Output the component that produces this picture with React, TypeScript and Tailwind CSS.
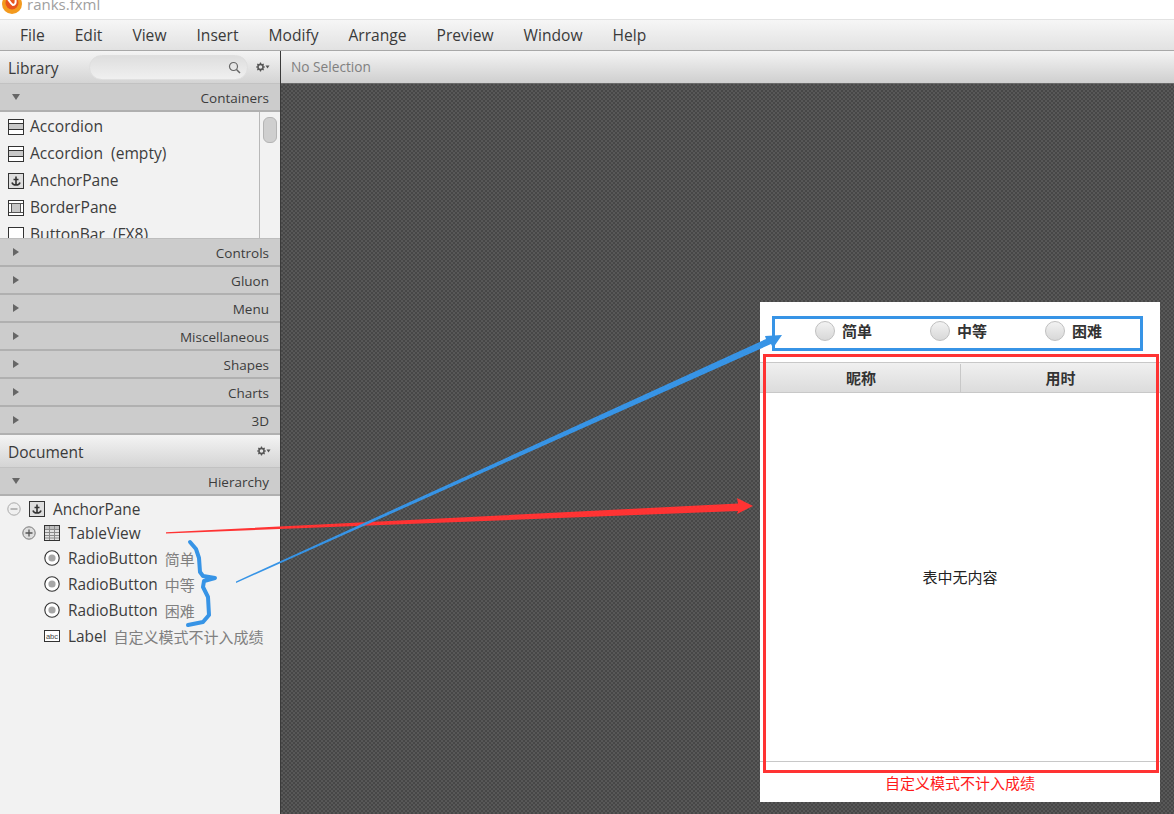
import React from "react";

const FONT = '"Open Sans","Noto Sans","Noto Sans CJK SC",sans-serif';

function Frame({ children, size = 16 }: { children: React.ReactNode; size?: number }) {
  return (
    <svg width={size} height={size} viewBox="0 0 16 16" className="shrink-0">
      {children}
    </svg>
  );
}

function AccordionIcon() {
  return (
    <Frame>
      <rect x="0.5" y="0.5" width="15" height="15" fill="#fff" stroke="#333" />
      <rect x="1" y="5" width="14" height="6" fill="#c8c8c8" />
      <path d="M1 4.5H15M1 10.5H15" stroke="#333" />
    </Frame>
  );
}

function AnchorIcon() {
  return (
    <Frame>
      <rect x="0.5" y="0.5" width="15" height="15" fill="#dedede" stroke="#333" />
      <path d="M8 3.5V12M5.5 6.5H10.5M4 9.5C4.5 11.5 6 12 8 12C10 12 11.5 11.5 12 9.5" fill="none" stroke="#333" strokeWidth="1.6" />
    </Frame>
  );
}

function BorderIcon() {
  return (
    <Frame>
      <rect x="0.5" y="0.5" width="15" height="15" fill="#fff" stroke="#333" />
      <rect x="4" y="4" width="8" height="8" fill="#c8c8c8" />
      <path d="M1 3.5H15M1 12.5H15M3.5 3.5V12.5M12.5 3.5V12.5" stroke="#555" />
    </Frame>
  );
}

function ButtonBarIcon() {
  return (
    <Frame>
      <rect x="0.5" y="0.5" width="15" height="15" fill="#fff" stroke="#333" />
    </Frame>
  );
}

function TableIcon() {
  return (
    <Frame>
      <rect x="0.5" y="0.5" width="15" height="15" fill="#e2e2e2" stroke="#333" />
      <rect x="1" y="1" width="14" height="3" fill="#bdbdbd" />
      <path d="M1 4.5H15M1 7.5H15M1 10.5H15M1 13H15M5.5 1V15M10.5 1V15" stroke="#8a8a8a" />
    </Frame>
  );
}

function RadioIcon() {
  return (
    <Frame>
      <circle cx="8" cy="8" r="7.2" fill="#fff" stroke="#333" strokeWidth="1.1" />
      <circle cx="8" cy="8" r="3.6" fill="#a6a6a6" />
    </Frame>
  );
}

function LabelIcon() {
  return (
    <span className="flex h-[12px] w-[16px] shrink-0 items-center justify-center overflow-hidden border border-[#333] bg-white font-['Liberation_Sans'] text-[7.5px] leading-[9px] text-[#444]">
      abc
    </span>
  );
}

function Gear() {
  return (
    <svg width="14" height="10" viewBox="0 0 14 10">
      <circle cx="4.5" cy="5" r="2.6" fill="none" stroke="#555" strokeWidth="1.6" />
      <path d="M4.5 0.5V2M4.5 8V9.5M0 5H1.5M7.5 5H9M1.3 1.8L2.4 2.9M6.6 7.1L7.7 8.2M7.7 1.8L6.6 2.9M2.4 7.1L1.3 8.2" stroke="#555" strokeWidth="1.2" />
      <path d="M9.5 3.5H13.5L11.5 6.5Z" fill="#555" />
    </svg>
  );
}

function TreeToggle({ plus }: { plus?: boolean }) {
  return (
    <svg width="14" height="14" viewBox="0 0 14 14" className="shrink-0">
      <circle cx="7" cy="7" r="6.2" fill={plus ? "#dedede" : "#f0f0f0"} stroke={plus ? "#777" : "#aaa"} />
      <path d={plus ? "M3.5 7H10.5M7 3.5V10.5" : "M3.5 7H10.5"} stroke={plus ? "#555" : "#999"} strokeWidth="1.3" />
    </svg>
  );
}

function Section({ label, open }: { label: string; open?: boolean }) {
  return (
    <div className="flex h-[28px] shrink-0 items-center justify-between border-b-2 border-[#b0b0b0] bg-[#cccccc] pl-[11px] pr-[11px] pt-[2px] text-[13.5px] text-[#3c3c3c]">
      <svg width="10" height="10" viewBox="0 0 10 10" className="mb-[3px]">
        <path d={open ? "M1 2H9L5 8Z" : "M2 1L8 5L2 9Z"} fill="#666" />
      </svg>
      <span>{label}</span>
    </div>
  );
}

function LibRow({ icon, text }: { icon: React.ReactNode; text: string }) {
  return (
    <div className="flex h-[27px] shrink-0 items-center gap-[6px] pl-[8px] text-[15.6px] text-[#3d3d3d]">
      {icon}
      <span className="whitespace-pre">{text}</span>
    </div>
  );
}

function TreeRow({
  h,
  pl,
  icon,
  toggle,
  text,
  note,
}: {
  h: string;
  pl: string;
  icon: React.ReactNode;
  toggle?: React.ReactNode;
  text: string;
  note?: string;
}) {
  return (
    <div className={`flex items-center ${h} ${pl} text-[15.4px] text-[#3d3d3d]`}>
      {toggle ? <span className="mr-[8px] flex">{toggle}</span> : null}
      <span className="flex w-[24px] shrink-0">{icon}</span>
      <span className="mt-[2px]">{text}</span>
      {note ? <span className="ml-[7px] mt-[2px] text-[15px] text-[#808080]">{note}</span> : null}
    </div>
  );
}

function Radio({ label }: { label: string }) {
  return (
    <div className="flex w-[115px] items-center gap-[7px]">
      <span className="h-[20px] w-[20px] rounded-full border border-[#c0c0c0] bg-gradient-to-b from-[#f2f2f2] to-[#d8d8d8]" />
      <span className="text-[15px] font-bold text-[#333]">{label}</span>
    </div>
  );
}

export default function App() {
  const menus = ["File", "Edit", "View", "Insert", "Modify", "Arrange", "Preview", "Window", "Help"];
  return (
    <div className="relative flex h-[814px] w-[1174px] flex-col overflow-hidden bg-white" style={{ fontFamily: FONT }}>
      {/* Title bar */}
      <div className="flex h-[20px] shrink-0 items-start overflow-hidden border-b border-[#e2e2e2] bg-white pl-[2px]">
        <svg width="20" height="20" viewBox="0 0 20 20" className="mt-[-6px] shrink-0">
          <circle cx="10" cy="10" r="10" fill="#f39a1e" />
          <circle cx="10" cy="9" r="6.5" fill="#e8541d" />
          <path d="M6 5C8 8 9 10 11 11C13 11 14 9 13.5 6" fill="none" stroke="#fff" strokeWidth="2" />
        </svg>
        <span className="ml-[5px] mt-[-7px] text-[15px] leading-[22px] text-[#a0a0a0]">ranks.fxml</span>
      </div>

      {/* Menu bar */}
      <div className="flex h-[31px] shrink-0 items-center border-b border-[#a8a8a8] bg-gradient-to-b from-[#f6f6f6] to-[#e2e2e2] pl-[5px] pt-[2px] text-[15.6px] text-[#3a3a3a]">
        {menus.map((m) => (
          <span key={m} className="px-[15px]">
            {m}
          </span>
        ))}
      </div>

      <div className="flex min-h-0 flex-1">
        {/* Left column */}
        <div className="flex w-[281px] shrink-0 flex-col border-r border-[#3a3a3a] bg-[#f2f2f2]">
          <div className="flex h-[33px] shrink-0 items-center border-b border-[#c2c2c2] bg-gradient-to-b from-[#f4f4f4] to-[#d4d4d4] pl-[8px]">
            <span className="mt-[3px] w-[81px] text-[15.5px] text-[#3a3a3a]">Library</span>
            <div className="flex h-[25px] w-[159px] items-center justify-end rounded-full border border-[#dfdfdf] bg-gradient-to-b from-[#dedede] to-[#f0f0f0] pr-[6px]">
              <svg width="13" height="13" viewBox="0 0 13 13">
                <circle cx="5.5" cy="5.5" r="4" fill="none" stroke="#666" strokeWidth="1.2" />
                <path d="M8.5 8.5L12 12" stroke="#666" strokeWidth="1.5" />
              </svg>
            </div>
            <span className="ml-[8px] flex">
              <Gear />
            </span>
          </div>
          <Section label="Containers" open />

          <div className="flex h-[127px] shrink-0 overflow-hidden border-b border-[#bdbdbd]">
            <div className="flex w-[260px] flex-col overflow-hidden border-r border-[#b8b8b8] pt-[1px]">
              <LibRow icon={<AccordionIcon />} text="Accordion" />
              <LibRow icon={<AccordionIcon />} text="Accordion  (empty)" />
              <LibRow icon={<AnchorIcon />} text="AnchorPane" />
              <LibRow icon={<BorderIcon />} text="BorderPane" />
              <LibRow icon={<ButtonBarIcon />} text="ButtonBar  (FX8)" />
            </div>
            <div className="flex-1 pl-[3px] pt-[5px]">
              <div className="h-[26px] w-[14px] rounded-[6px] border border-[#b4b4b4] bg-[#cfcfcf]" />
            </div>
          </div>

          <Section label="Controls" />
          <Section label="Gluon" />
          <Section label="Menu" />
          <Section label="Miscellaneous" />
          <Section label="Shapes" />
          <Section label="Charts" />
          <Section label="3D" />

          <div className="flex h-[33px] shrink-0 items-center justify-between border-b border-[#c2c2c2] bg-gradient-to-b from-[#f4f4f4] to-[#d4d4d4] pl-[8px] pr-[9px]">
            <span className="mt-[3px] text-[15.5px] text-[#3a3a3a]">Document</span>
            <Gear />
          </div>
          <Section label="Hierarchy" open />

          <div className="flex flex-col">
            <TreeRow h="h-[25px]" pl="pl-[7px]" toggle={<TreeToggle />} icon={<AnchorIcon />} text="AnchorPane" />
            <TreeRow h="h-[24px]" pl="pl-[22px]" toggle={<TreeToggle plus />} icon={<TableIcon />} text="TableView" />
            <TreeRow h="h-[26px]" pl="pl-[44px]" icon={<RadioIcon />} text="RadioButton" note="简单" />
            <TreeRow h="h-[26px]" pl="pl-[44px]" icon={<RadioIcon />} text="RadioButton" note="中等" />
            <TreeRow h="h-[26px]" pl="pl-[44px]" icon={<RadioIcon />} text="RadioButton" note="困难" />
            <TreeRow h="h-[26px]" pl="pl-[44px]" icon={<LabelIcon />} text="Label" note="自定义模式不计入成绩" />
          </div>
        </div>

        {/* Right column */}
        <div className="flex min-w-0 flex-1 flex-col">
          <div className="flex h-[33px] shrink-0 items-center border-b border-[#6a6a6a] bg-gradient-to-b from-[#f4f4f4] to-[#cfcfcf] pl-[10px] text-[13.7px] text-[#808080]">
            No Selection
          </div>
          <div className="relative flex-1 bg-[repeating-conic-gradient(#474747_0_25%,#585858_0_50%)] bg-[length:4px_4px]">
            {/* Preview window on the canvas */}
            <div className="absolute left-[479px] top-[218px] flex h-[500px] w-[400px] flex-col bg-white">
              <div className="flex h-[22px] mt-[18px] shrink-0 items-center pl-[55px]">
                <Radio label="简单" />
                <Radio label="中等" />
                <Radio label="困难" />
              </div>
              <div className="mt-[20px] flex h-[400px] shrink-0 flex-col border-y border-[#c8c8c8]">
                <div className="flex h-[30px] shrink-0 border-b border-[#c8c8c8] bg-gradient-to-b from-[#f0f0f0] to-[#dcdcdc] pt-[1px] text-[15px] font-bold text-[#333]">
                  <div className="flex w-[201px] items-center justify-center border-r border-[#c8c8c8] pl-[2px]">昵称</div>
                  <div className="flex flex-1 items-center justify-center">用时</div>
                </div>
                <div className="flex flex-1 items-center justify-center text-[15px] text-[#222]">表中无内容</div>
              </div>
              <div className="flex flex-1 items-center justify-center pt-[2px] text-[15px] text-[#ff1a1a]">
                自定义模式不计入成绩
              </div>
            </div>
          </div>
        </div>
      </div>

      {/* Hand-drawn annotations lying over the screenshot */}
      <div className="pointer-events-none absolute left-[772px] top-[316px] h-[35px] w-[371px] border-[3px] border-[#3794e6]" />
      <div className="pointer-events-none absolute left-[763px] top-[354px] h-[419px] w-[396px] border-[3px] border-[#ff3333]" />
      <svg className="pointer-events-none absolute left-0 top-0" width="1174" height="814" viewBox="0 0 1174 814">
        <polygon points="166,532.3 738,503.5 737,498 753,506 737,514 738,511 166,533.5" fill="#ff3333" />
        <polygon points="236,581.5 766,339 765,336 782,335 773,348 771,344 236,583" fill="#3794e6" />
        <path
          d="M190 542L196 549L199 558L200 572L203 576L215 578L204 581L203 587L208 597L209 615L203 622L188 625"
          fill="none"
          stroke="#3794e6"
          strokeWidth="4"
          strokeLinecap="round"
          strokeLinejoin="round"
        />
      </svg>
    </div>
  );
}
